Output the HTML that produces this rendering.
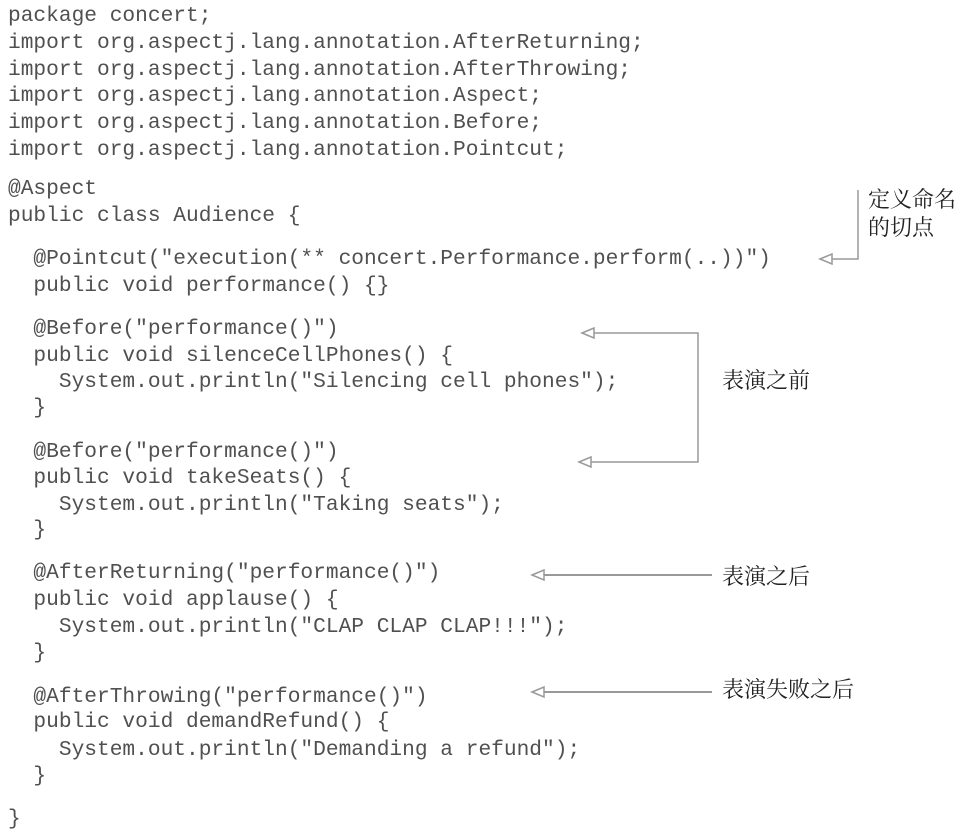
<!DOCTYPE html>
<html><head><meta charset="utf-8"><style>
html,body{margin:0;padding:0;background:#fff;width:966px;height:836px;overflow:hidden;position:relative}
.l{position:absolute;left:8px;font-family:"Liberation Mono",monospace;font-size:21.2px;line-height:26px;color:#505050;white-space:pre;margin-top:-13px}
.c{position:absolute;font-family:"Liberation Sans","Noto Serif CJK SC","Noto Sans CJK SC",sans-serif;font-size:22px;line-height:28px;color:#222;margin-top:-14px}
svg{position:absolute;left:0;top:0}
</style></head><body>
<div class="l" style="top:16px">package concert;</div>
<div class="l" style="top:43px">import org.aspectj.lang.annotation.AfterReturning;</div>
<div class="l" style="top:70px">import org.aspectj.lang.annotation.AfterThrowing;</div>
<div class="l" style="top:96px">import org.aspectj.lang.annotation.Aspect;</div>
<div class="l" style="top:123px">import org.aspectj.lang.annotation.Before;</div>
<div class="l" style="top:150px">import org.aspectj.lang.annotation.Pointcut;</div>
<div class="l" style="top:189px">@Aspect</div>
<div class="l" style="top:216px">public class Audience {</div>
<div class="l" style="top:259px">  @Pointcut("execution(** concert.Performance.perform(..))")</div>
<div class="l" style="top:286px">  public void performance() {}</div>
<div class="l" style="top:329px">  @Before("performance()")</div>
<div class="l" style="top:356px">  public void silenceCellPhones() {</div>
<div class="l" style="top:382px">    System.out.println("Silencing cell phones");</div>
<div class="l" style="top:408px">  }</div>
<div class="l" style="top:452px">  @Before("performance()")</div>
<div class="l" style="top:478px">  public void takeSeats() {</div>
<div class="l" style="top:505px">    System.out.println("Taking seats");</div>
<div class="l" style="top:530px">  }</div>
<div class="l" style="top:573px">  @AfterReturning("performance()")</div>
<div class="l" style="top:600px">  public void applause() {</div>
<div class="l" style="top:627px">    System.out.println("CLAP CLAP CLAP!!!");</div>
<div class="l" style="top:653px">  }</div>
<div class="l" style="top:697px">  @AfterThrowing("performance()")</div>
<div class="l" style="top:722px">  public void demandRefund() {</div>
<div class="l" style="top:750px">    System.out.println("Demanding a refund");</div>
<div class="l" style="top:776px">  }</div>
<div class="l" style="top:819px">}</div>

<div class="c" style="left:868px;top:200px">定义命名</div>
<div class="c" style="left:868px;top:228px">的切点</div>
<div class="c" style="left:722px;top:381px">表演之前</div>
<div class="c" style="left:722px;top:577px">表演之后</div>
<div class="c" style="left:722px;top:690px">表演失败之后</div>

<svg width="966" height="836" fill="none" stroke="#999" stroke-width="1.5">
<polyline points="858,190 858,259 823,259"/>
<polygon points="820,259 832,254 832,264" fill="#fff"/>
<polyline points="585,333 698,333 698,462 585,462"/>
<polygon points="582,333 594,328 594,338" fill="#fff"/>
<polygon points="579,462 591,457 591,467" fill="#fff"/>
<line x1="535" y1="575" x2="712" y2="575" stroke-width="2"/>
<polygon points="532,575 544,570 544,580" fill="#fff"/>
<line x1="535" y1="692" x2="712" y2="692" stroke-width="2"/>
<polygon points="532,692 544,687 544,697" fill="#fff"/>
</svg>
</body></html>
